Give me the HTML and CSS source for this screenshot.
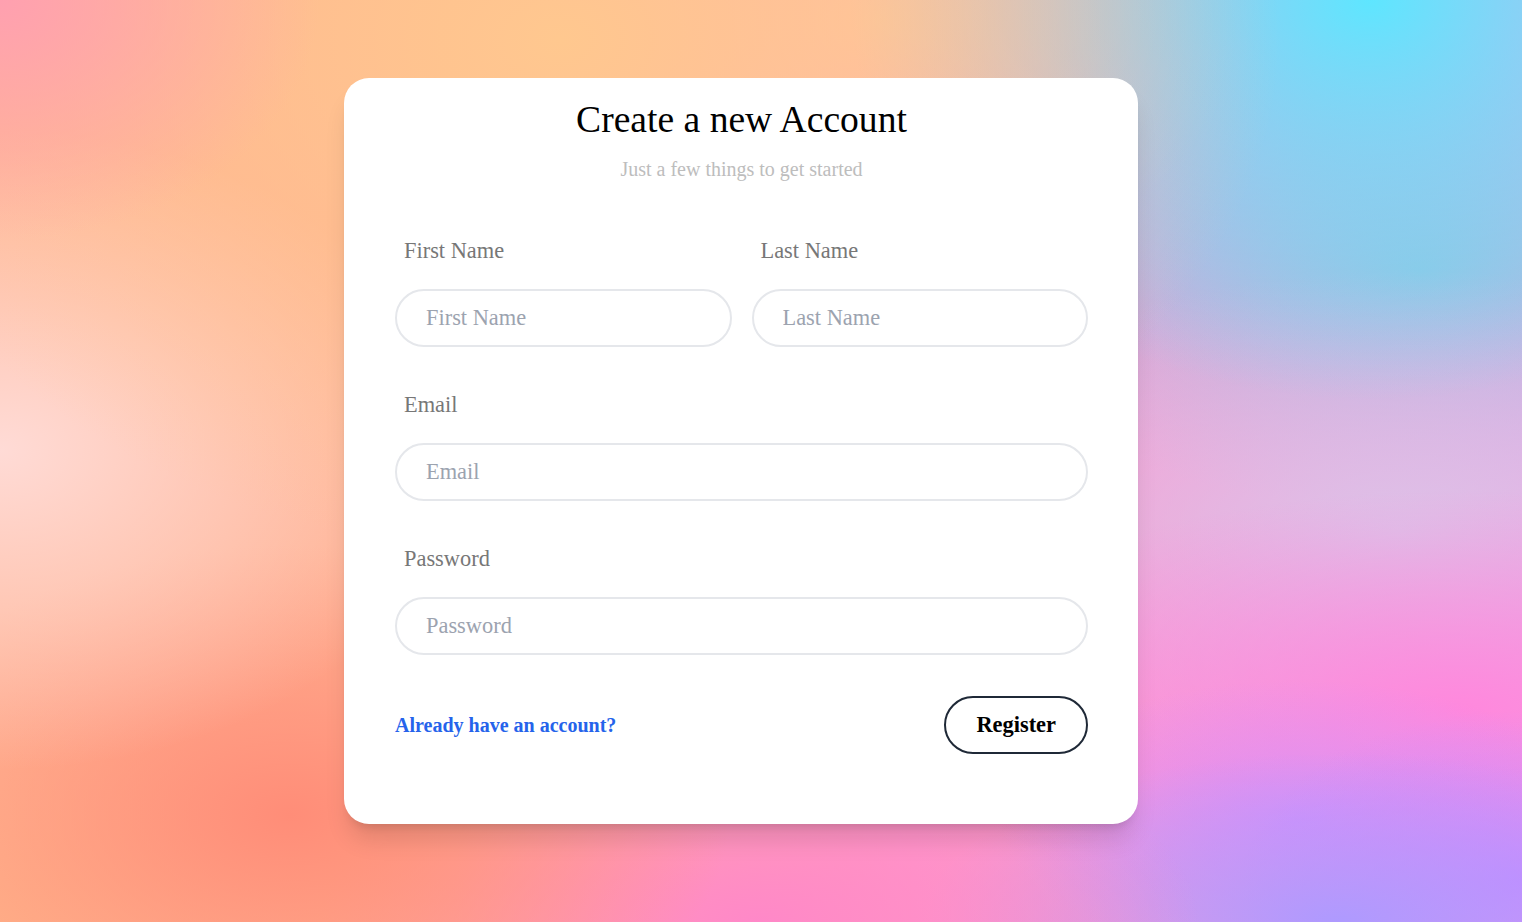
FILE: index.html
```html
<!DOCTYPE html>
<html lang="en">
<head>
<meta charset="utf-8">
<title>Create a new Account</title>
<link rel="stylesheet" href="styles.css">
</head>
<body>
<main class="page">
  <form class="card">
    <h1 class="title">Create a new Account</h1>
    <p class="subtitle">Just a few things to get started</p>
    <div class="fields">
      <div class="row">
        <div class="field">
          <label class="label" for="first">First Name</label>
          <input class="input" id="first" type="text" placeholder="First Name">
        </div>
        <div class="field">
          <label class="label" for="last">Last Name</label>
          <input class="input" id="last" type="text" placeholder="Last Name">
        </div>
      </div>
      <div class="field">
        <label class="label" for="email">Email</label>
        <input class="input" id="email" type="email" placeholder="Email">
      </div>
      <div class="field">
        <label class="label" for="password">Password</label>
        <input class="input" id="password" type="password" placeholder="Password">
      </div>
    </div>
    <div class="footer">
      <a class="link" href="#">Already have an account?</a>
      <button class="btn" type="button">Register</button>
    </div>
  </form>
</main>
</body>
</html>
```
FILE: styles.css
```css
* { box-sizing: border-box; }
html, body { margin: 0; height: 100%; }
body {
  font-family: "Liberation Serif", "Times New Roman", serif;
  background-color: #ffaaa0;
  background-image:
    radial-gradient(ellipse 320px 240px at 0 0, #ffa0b0, rgba(255,160,176,0)),
    radial-gradient(ellipse 720px 520px at 560px 40px, #ffc88f, rgba(255,200,143,0)),
    radial-gradient(ellipse 520px 400px at 1370px 0, #5ee6ff, rgba(94,230,255,0)),
    radial-gradient(ellipse 360px 260px at 880px 20px, #ffc0a0, rgba(255,192,160,0)),
    radial-gradient(ellipse 460px 320px at 0 450px, #ffdbd6, rgba(255,219,214,0)),
    radial-gradient(ellipse 440px 270px at 290px 815px, #ff8d78, rgba(255,141,120,0)),
    radial-gradient(ellipse 320px 220px at 0 922px, #ffb48a, rgba(255,180,138,0)),
    radial-gradient(ellipse 440px 200px at 760px 922px, #ff88c8, rgba(255,136,200,0)),
    radial-gradient(ellipse 420px 170px at 1340px 922px, #ae9aff, rgba(174,154,255,0)),
    radial-gradient(ellipse 280px 170px at 1522px 880px, #cc88ff, rgba(204,136,255,0)),
    radial-gradient(ellipse 300px 140px at 1300px 820px, #d890f8, rgba(216,144,248,0)),
    radial-gradient(ellipse 560px 220px at 1460px 710px, #ff88dd, rgba(255,136,221,0)),
    radial-gradient(ellipse 520px 260px at 1400px 530px, #dcc2e8, rgba(220,194,232,0)),
    radial-gradient(ellipse 480px 240px at 1420px 270px, #9cc0e0, rgba(156,192,224,0)),
    linear-gradient(to right, #ffb494 0%, #ffb090 30%, #ff9ac8 60%, #f0a0e0 100%);
}
.page {
  min-height: 100%;
  padding: 78px 0 0 344px;
}
.card {
  width: 794px;
  background: #fff;
  border-radius: 25px;
  padding: 20px 50px 70px 51px;
  box-shadow: 0 20px 25px -5px rgba(0, 0, 0, 0.12), 0 8px 10px -6px rgba(0, 0, 0, 0.12);
}
.title {
  margin: 0;
  text-align: center;
  font-size: 37.6px;
  line-height: 44px;
  font-weight: normal;
  color: #000;
}
.subtitle {
  margin: 15px 0 0;
  text-align: center;
  font-size: 20px;
  line-height: 24px;
  color: #bdbdbd;
}
.fields {
  margin-top: 56px;
  display: flex;
  flex-direction: column;
  gap: 44px;
}
.row {
  display: grid;
  grid-template-columns: 1fr 1fr;
  gap: 20px;
}
.field {
  display: flex;
  flex-direction: column;
  gap: 24px;
}
.label {
  padding-left: 9px;
  font-size: 22.4px;
  line-height: 28px;
  color: #777;
}
.input {
  width: 100%;
  height: 58px;
  border: 2px solid #e5e7eb;
  border-radius: 9999px;
  padding: 0 29px;
  font-family: inherit;
  font-size: 22.4px;
  color: #111;
  background: #fff;
  outline: none;
}
.input::placeholder { color: #9ca3af; }
.footer {
  margin-top: 41px;
  display: flex;
  align-items: center;
  justify-content: space-between;
}
.link {
  font-size: 20px;
  font-weight: bold;
  color: #2563eb;
  text-decoration: none;
}
.btn {
  height: 58px;
  padding: 0 30px;
  border: 2px solid #1f2937;
  border-radius: 9999px;
  background: #fff;
  font-family: inherit;
  font-size: 22.4px;
  font-weight: bold;
  color: #000;
  cursor: pointer;
}
```
